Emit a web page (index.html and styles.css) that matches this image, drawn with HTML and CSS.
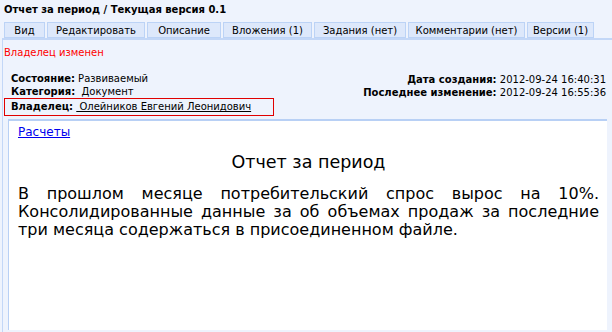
FILE: index.html
```html
<!DOCTYPE html>
<html>
<head>
<meta charset="utf-8">
<link rel="stylesheet" href="styles.css">
</head>
<body>
<div class="page">
  <div class="title">Отчет за период / Текущая версия 0.1</div>
  <div class="tabs">
    <span class="tab w1">Вид</span>
    <span class="tab w2">Редактировать</span>
    <span class="tab w3">Описание</span>
    <span class="tab w4">Вложения (1)</span>
    <span class="tab w5">Задания (нет)</span>
    <span class="tab w6">Комментарии (нет)</span>
    <span class="tab w7">Версии (1)</span>
  </div>
  <div class="panel">
    <div class="notice">Владелец изменен</div>
    <div class="meta">
      <div class="meta-left">
        <div class="row"><b>Состояние:</b> Развиваемый</div>
        <div class="row"><b>Категория:</b>&nbsp; Документ</div>
        <div class="row owner"><b>Владелец:</b> <a class="owner-link">&nbsp;Олейников Евгений Леонидович</a></div>
      </div>
      <div class="meta-right">
        <div class="row"><b>Дата создания:</b> 2012-09-24 16:40:31</div>
        <div class="row"><b>Последнее изменение:</b> 2012-09-24 16:55:36</div>
      </div>
    </div>
    <div class="content">
      <a class="crumb" href="#">Расчеты</a>
      <h1 class="heading">Отчет за период</h1>
      <p class="text">В прошлом месяце потребительский спрос вырос на 10%. Консолидированные данные за об объемах продаж за последние три месяца содержаться в присоединенном файле.</p>
    </div>
  </div>
</div>
</body>
</html>
```
FILE: styles.css
```css
html, body {
  margin: 0;
  padding: 0;
  background: #eef3fd;
  height: 100%;
}
.page {
  display: flex;
  flex-direction: column;
  height: 332px;
  font-family: "DejaVu Sans", Verdana, sans-serif;
  font-size: 10px;
  color: #000;
}
.title {
  font-weight: bold;
  font-size: 10px;
  line-height: 12px;
  padding: 4px 0 0 4px;
  height: 22px;
  box-sizing: border-box;
}
.tabs {
  display: flex;
  gap: 2px;
  padding-left: 4px;
  height: 16px;
}
.tab {
  box-sizing: border-box;
  height: 16px;
  background: #dde8fb;
  border: 1px solid #bcd3f6;
  display: flex;
  align-items: center;
  justify-content: center;
  font-size: 10px;
}
.w1 { width: 41px; }
.w2 { width: 98px; }
.w3 { width: 74px; }
.w4 { width: 89px; }
.w5 { width: 92px; }
.w6 { width: 117px; }
.w7 { width: 67px; }
.panel {
  flex: 1;
  margin-left: 2px;
  border-left: 1px solid #c3d7f7;
  border-top: 2px solid #c3d7f7;
  display: flex;
  flex-direction: column;
  min-height: 0;
}
.notice {
  color: #ff0000;
  font-size: 10px;
  line-height: 12px;
  padding: 7px 0 0 1px;
  height: 32px;
  box-sizing: border-box;
}
.meta {
  display: flex;
  justify-content: space-between;
  padding: 0 6px 0 1px;
}
.row {
  height: 13px;
  line-height: 13px;
}
.meta-left .row { padding-left: 7px; }
.meta-right .row { text-align: right; }
.meta-right { padding-top: 1px; }
.row.owner {
  border: 1px solid #e00000;
  height: 18px;
  box-sizing: border-box;
  line-height: 16px;
  padding-left: 6px;
  width: 270px;
}
.owner-link {
  color: #000;
  text-decoration: underline;
}
.content {
  flex: 1;
  margin: 3px 5px 2px 5px;
  background: #fff;
  border-left: 1px solid #b8d0f5;
  border-top: 2px solid #b8d0f5;
  padding: 4px 8px 0 9px;
}
.crumb {
  display: inline-block;
  color: #0000ee;
  font-size: 12px;
  line-height: 14px;
  text-decoration: underline;
}
.heading {
  margin: 12px 0 12px;
  text-align: center;
  font-size: 17.5px;
  font-weight: normal;
  line-height: 22px;
}
.text {
  margin: 0;
  font-size: 16px;
  line-height: 18px;
  text-align: justify;
}
```
